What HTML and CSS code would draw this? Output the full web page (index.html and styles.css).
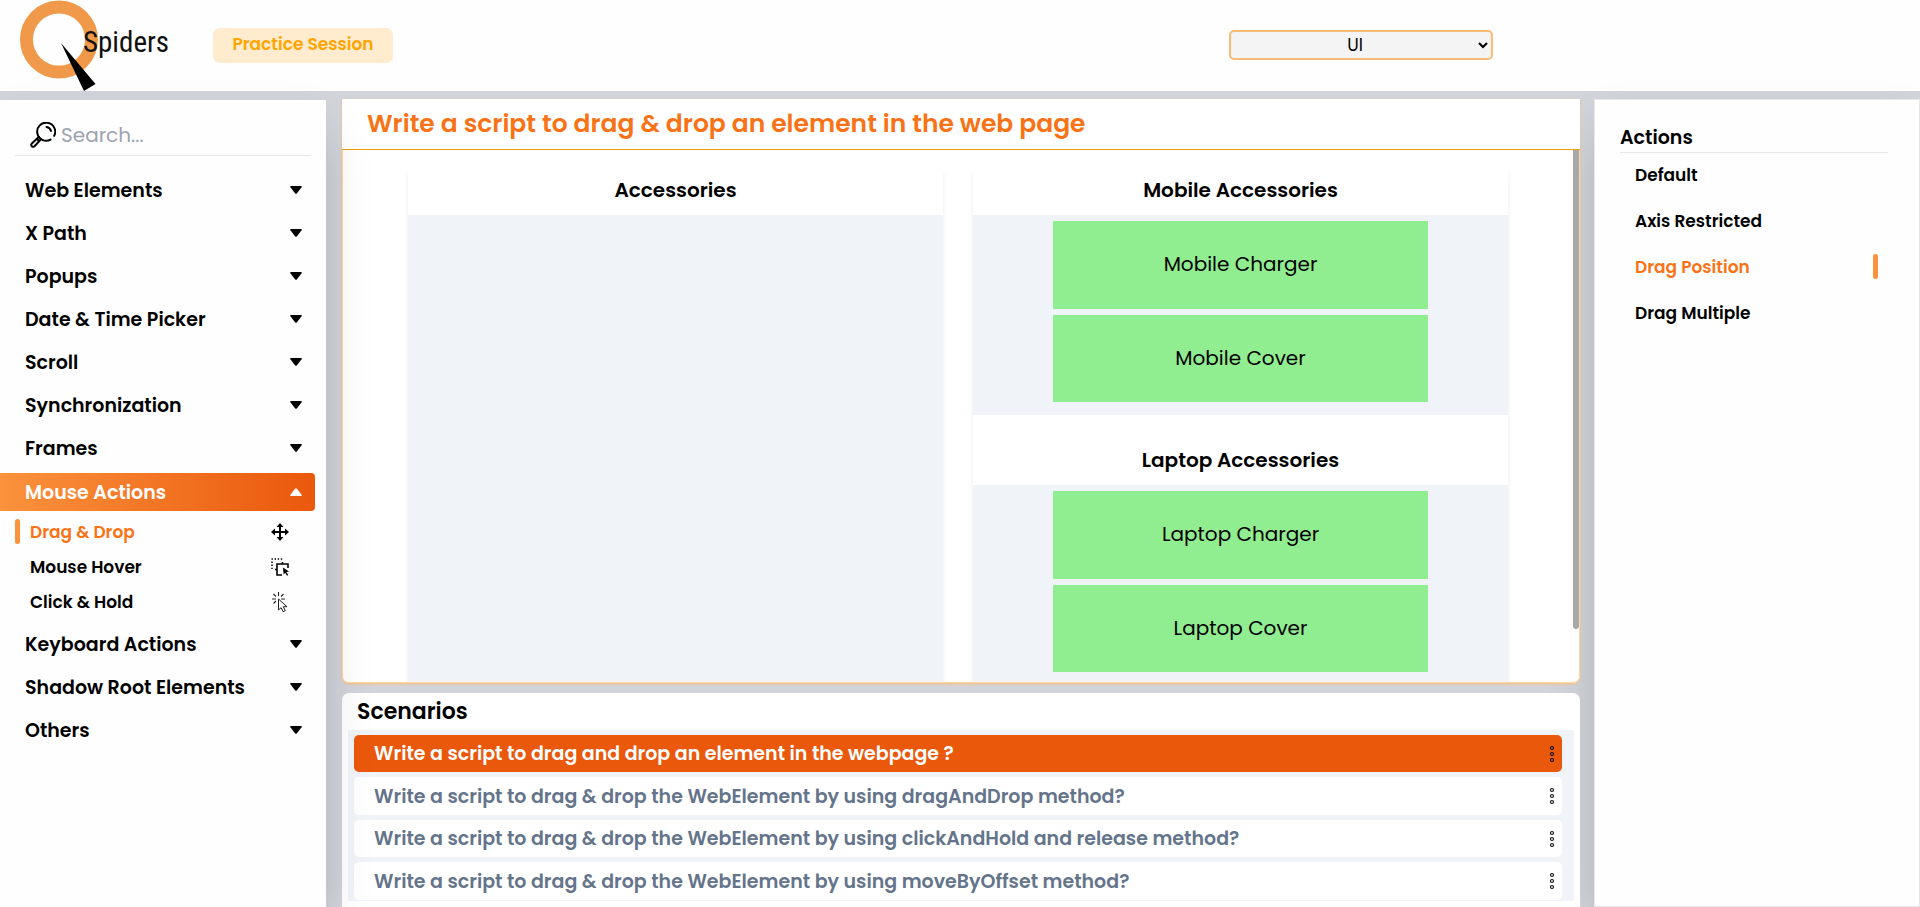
FILE: index.html
```
<!DOCTYPE html>
<html lang="en">
<head>
<meta charset="utf-8">
<title>QSpiders Practice Session</title>
<link rel="stylesheet" href="styles.css">
</head>
<body>
<svg class="defs" aria-hidden="true">
  <symbol id="caret" viewBox="0 0 12 8"><path d="M1 0h10q1.400 0 .6 1.200L7 7.300q-1 1-2 0L.4 1.200Q-.4 0 1 0z"/></symbol>
  <symbol id="dots" viewBox="0 0 6 18"><g fill="none" stroke="currentColor" stroke-width="1.200"><circle cx="3" cy="3" r="1.500"/><circle cx="3" cy="9" r="1.500"/><circle cx="3" cy="15" r="1.500"/></g></symbol>
</svg>
<header class="topbar">
  <svg class="logo" viewBox="0 0 150 92" role="img" aria-label="QSpiders">
    <circle cx="39" cy="39.500" r="32.500" fill="none" stroke="#f0994a" stroke-width="13"/>
    <path d="M41 43 75.500 84 64 91z"/>
    <text class="logo-text" x="63" y="52">Spiders</text>
  </svg>
  <button class="session" type="button">Practice Session</button>
  <select class="mode" aria-label="Mode"><option>UI</option></select>
</header>
<div class="layout">
  <nav class="sidebar">
    <label class="search">
      <svg viewBox="0 0 26 26" width="26" height="26" fill="none" stroke="#000" stroke-width="2" stroke-linecap="round" stroke-linejoin="round"><path d="M24.200 13.800A9 9 0 1 0 20.500 17.600M16.500 5q3.500.5 4.500 4M9 14.800 1.800 21.500Q.6 23 1.800 24.200T4.500 24.200L11.200 17M7 17l2 2"/></svg>
      <input type="text" placeholder="Search..." aria-label="Search">
    </label>
    <button class="item" type="button">Web Elements<svg class="caret"><use href="#caret"/></svg></button>
    <button class="item" type="button">X Path<svg class="caret"><use href="#caret"/></svg></button>
    <button class="item" type="button">Popups<svg class="caret"><use href="#caret"/></svg></button>
    <button class="item" type="button">Date &amp; Time Picker<svg class="caret"><use href="#caret"/></svg></button>
    <button class="item" type="button">Scroll<svg class="caret"><use href="#caret"/></svg></button>
    <button class="item" type="button">Synchronization<svg class="caret"><use href="#caret"/></svg></button>
    <button class="item" type="button">Frames<svg class="caret"><use href="#caret"/></svg></button>
    <button class="item open" type="button">Mouse Actions<svg class="caret"><use href="#caret"/></svg></button>
    <div class="sub">
      <a class="subitem current" href="#">Drag &amp; Drop
        <svg width="18" height="18" viewBox="0 0 18 18"><path d="M9 1v16M1 9h16" stroke="#000" stroke-width="2"/><path d="M9 0l3.500 4h-7zM9 18l3.500-4h-7zM0 9l4-3.500v7zM18 9l-4-3.500v7z"/></svg></a>
      <a class="subitem" href="#">Mouse Hover
        <svg width="18" height="18" viewBox="0 0 18 18"><path d="M.5 1h12M1 3.500v9" fill="none" stroke="#000" stroke-width="1.400" stroke-dasharray="1.400 1.700"/><path d="M4 11.500h2M11 17H6V6h11v4M11.500 6V4" fill="none" stroke="#000" stroke-width="1.600"/><path d="M12 9.500 18 13.500l-2.600.6 1.800 3-1.200.7-1.800-3-1.600 1.700z"/></svg></a>
      <a class="subitem" href="#">Click &amp; Hold
        <svg width="18" height="20" viewBox="0 0 18 20" fill="none" stroke="#222"><path d="M7.500 0v4M2.500 2 5 4.500M1 7h4M2.500 11.500 5 9M10 4.500 12.500 2M10 7h4" stroke-width="1.100"/><path d="M7.500 7v11l2.600-2.300 2 4 2.200-1-2-4h3.700z"/></svg></a>
    </div>
    <button class="item" type="button">Keyboard Actions<svg class="caret"><use href="#caret"/></svg></button>
    <button class="item" type="button">Shadow Root Elements<svg class="caret"><use href="#caret"/></svg></button>
    <button class="item" type="button">Others<svg class="caret"><use href="#caret"/></svg></button>
  </nav>
  <main class="center">
    <section class="task">
      <h1 class="task-title">Write a script to drag &amp; drop an element in the web page</h1>
      <div class="board">
        <div class="zone">
          <h2 class="zone-title">Accessories</h2>
        </div>
        <div class="zone">
          <h2 class="zone-title">Mobile Accessories</h2>
          <div class="cards">
            <div class="card" draggable="true">Mobile Charger</div>
            <div class="card" draggable="true">Mobile Cover</div>
          </div>
          <h2 class="zone-title second">Laptop Accessories</h2>
          <div class="cards">
            <div class="card" draggable="true">Laptop Charger</div>
            <div class="card" draggable="true">Laptop Cover</div>
          </div>
        </div>
        <div class="thumb"></div>
      </div>
    </section>
    <section class="scenarios">
      <h2 class="scenarios-title">Scenarios</h2>
      <div class="list">
        <button class="row selected" type="button">Write a script to drag and drop an element in the webpage ?<svg class="dots"><use href="#dots"/></svg></button>
        <button class="row" type="button">Write a script to drag &amp; drop the WebElement by using dragAndDrop method?<svg class="dots"><use href="#dots"/></svg></button>
        <button class="row" type="button">Write a script to drag &amp; drop the WebElement by using clickAndHold and release method?<svg class="dots"><use href="#dots"/></svg></button>
        <button class="row" type="button">Write a script to drag &amp; drop the WebElement by using moveByOffset method?<svg class="dots"><use href="#dots"/></svg></button>
      </div>
    </section>
  </main>
  <aside class="actions">
    <h2 class="actions-title">Actions</h2>
    <a class="action" href="#">Default</a>
    <a class="action" href="#">Axis Restricted</a>
    <a class="action current" href="#">Drag Position</a>
    <a class="action" href="#">Drag Multiple</a>
  </aside>
</div>
</body>
</html>
```
FILE: styles.css
```
* { box-sizing: border-box; }
body {
  margin: 0;
  height: 100vh;
  display: flex;
  flex-direction: column;
  overflow: hidden;
  background: #d1d5db;
  color: #000;
  font-family: Poppins, Inter, sans-serif;
}
button, input, select { font: inherit; color: inherit; border: 0; background: none; margin: 0; }
h1, h2 { margin: 0; }
a { color: inherit; text-decoration: none; }
.defs { display: none; }

.topbar {
  height: 91px;
  flex: none;
  display: flex;
  align-items: flex-start;
  background: #fefefe;
}
.logo { width: 150px; height: 92px; margin-left: 20px; flex: none; }
.logo-text { font-family: "Agency FB", "Liberation Sans Narrow", "Roboto Condensed", Roboto, sans-serif; font-size: 29px; fill: #111; }
.session {
  width: 180px;
  height: 35px;
  margin: 28px 0 0 43px;
  padding: 0 0 3px;
  border-radius: 7px;
  background: #ffebcd;
  color: orange;
  font-size: 17px;
  line-height: 26px;
  font-weight: 600;
}
.mode {
  width: 264px;
  height: 30px;
  margin: 30px 427px 0 auto;
  border: 2px solid #fdba74;
  border-radius: 5px;
  background: #f4f4f4;
  font-size: 17px;
  line-height: 24px;
  text-align: center;
  text-align-last: center;
}

.layout { flex: 1; min-height: 0; display: flex; }
.sidebar, .actions {
  position: relative;
  background: #fefefe;
  box-shadow: 0 25px 50px -12px rgba(0, 0, 0, .25);
}
.sidebar {
  z-index: 2;
  width: 326px;
  flex: none;
  margin-top: 9px;
  padding-top: 14px;
  display: flex;
  flex-direction: column;
}
.search {
  display: flex;
  align-items: center;
  gap: 5px;
  height: 42px;
  margin: 0 15px 15px;
  padding-left: 15px;
  border-bottom: 1px solid #e5e7eb;
}
.search input { width: 220px; padding: 0; font-size: 20px; outline: 0; }
.search input::placeholder { color: #9ca3af; }
.item {
  display: flex;
  align-items: center;
  justify-content: space-between;
  height: 38px;
  margin: 0 11px 5px 0;
  padding: 0 13px 0 25px;
  font-size: 19px;
  font-weight: 600;
  text-align: left;
}
.caret { width: 12px; height: 8px; }
.open {
  margin-top: 1px;
  margin-bottom: 3px;
  border-radius: 0 4px 4px 0;
  background: linear-gradient(to right, #fb923c, #ea580c);
  color: #fff;
  fill: #fff;
}
.open .caret { transform: rotate(180deg); }
.sub { margin-bottom: 6px; }
.subitem {
  display: flex;
  align-items: center;
  justify-content: space-between;
  height: 35px;
  margin: 0 37px 0 15px;
  padding-left: 15px;
  font-size: 17px;
  font-weight: 600;
}
.subitem.current, .action.current { color: #f97316; }
.subitem.current { padding-left: 0; }
.subitem.current::before, .action.current::after {
  content: "";
  width: 5px;
  height: 25px;
  border-radius: 3px;
  background: #fb923c;
}
.subitem.current::before { margin-right: 10px; }
.subitem.current svg { margin-left: auto; }

.center {
  position: relative;
  z-index: 1;
  flex: 1;
  min-width: 0;
  margin: 8px 14px 0 16px;
  display: flex;
  flex-direction: column;
  gap: 10px;
}
.task {
  flex: 1;
  min-height: 0;
  display: flex;
  flex-direction: column;
  border-radius: 0 0 7px 7px;
  background: #fff;
  box-shadow: 0 1px 3px #fdba74;
}
.task-title {
  height: 51px;
  flex: none;
  padding: 0 25px;
  border-bottom: 1px solid #f59e0b;
  color: #f97316;
  font-size: 25px;
  line-height: 50px;
  font-weight: 600;
}
.board {
  position: relative;
  flex: 1;
  min-height: 0;
  overflow: hidden;
  display: flex;
  gap: 30px;
  padding: 15px 71px 0 65px;
  border: 1px solid #fed7aa;
  border-top: 0;
  border-radius: 0 0 7px 7px;
}
.zone {
  flex: 1;
  height: 600px;
  background: #f0f3f8;
  box-shadow: 0 6px 6px -1px rgba(0, 0, 0, .1);
}
.zone-title {
  height: 50px;
  background: #fff;
  font-size: 20px;
  line-height: 51px;
  font-weight: 600;
  text-align: center;
}
.zone-title.second { height: 70px; padding-top: 20px; }
.cards {
  display: flex;
  flex-direction: column;
  align-items: center;
  gap: 6px;
  padding: 6px 0 13px;
}
.card {
  display: flex;
  align-items: center;
  justify-content: center;
  width: 70%;
  height: 88px;
  padding-bottom: 2px;
  background: #90ee90;
  font-size: 20px;
}
.card + .card { height: 87px; }
.thumb {
  position: absolute;
  top: 0;
  right: 0;
  width: 6px;
  height: 90%;
  border-radius: 0 0 4px 4px;
  background: #a8a8a8;
}
.scenarios {
  flex: none;
  padding: 0 6px 6px;
  border-radius: 7px 7px 0 0;
  background: #fff;
}
.scenarios-title { padding-left: 9px; font-size: 22px; line-height: 37px; font-weight: 600; }
.list {
  display: flex;
  flex-direction: column;
  gap: 5px;
  padding: 5px 12px 1px 6px;
  background: #f0f4f8;
}
.row {
  display: flex;
  align-items: center;
  justify-content: space-between;
  height: 38px;
  padding: 0 7px 0 20px;
  border-radius: 5px;
  background: #fff;
  color: #64748b;
  font-size: 19px;
  font-weight: 600;
  text-align: left;
}
.row.selected, .row:nth-child(3) { height: 37px; }
.row.selected { background: #ea580c; color: #fff; }
.dots { width: 6px; height: 18px; color: #111; }

.actions {
  width: 326px;
  flex: none;
  margin-top: 8px;
  padding: 23px 31px 0 25px;
  border: 1px solid #e5e7eb;
}
.actions-title {
  margin-bottom: 3px;
  border-bottom: 1px solid #e5e7eb;
  font-size: 19px;
  line-height: 29px;
  font-weight: 600;
}
.action {
  display: flex;
  align-items: center;
  justify-content: space-between;
  height: 37px;
  margin-bottom: 9px;
  padding: 0 10px 0 15px;
  font-size: 17px;
  font-weight: 600;
}
```
